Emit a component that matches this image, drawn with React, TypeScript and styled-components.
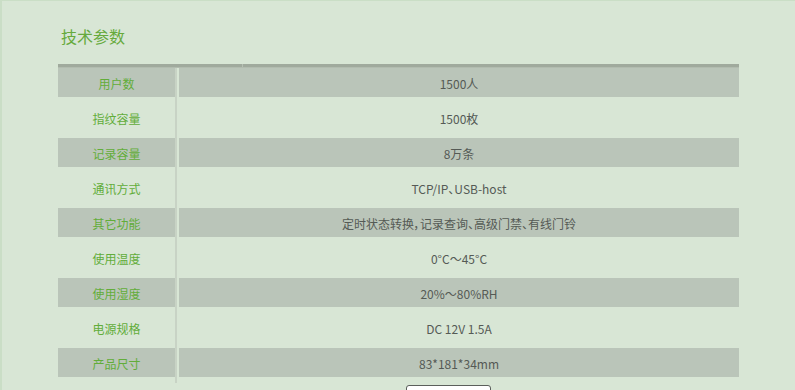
import React from "react";
import styled, { createGlobalStyle } from "styled-components";

const GlobalStyle = createGlobalStyle`
  html, body {
    margin: 0;
    padding: 0;
    background: #d8e6d5;
  }
  body {
    font-family: "Noto Sans CJK SC", "Noto Sans", sans-serif;
    font-feature-settings: "palt";
  }
`;

const Page = styled.div`
  box-sizing: border-box;
  height: 390px;
  overflow: hidden;
  border-top: 1px solid #cadec6;
  border-left: 2px solid #cadec6;
  padding: 23px 56px 0 56px;
  background: #d8e6d5;
`;

const Title = styled.h3`
  margin: 0 0 16px 3px;
  color: #66aa3c;
  font-size: 16px;
  font-weight: 400;
  line-height: 24px;
`;

const HeaderBar = styled.div`
  display: flex;
  height: 3px;
  border-bottom: 1px solid #b2bcaf;
`;

const HeaderCell = styled.div<{ $width?: number }>`
  background: #a0aa9d;
  ${(p) => (p.$width ? `width: ${p.$width}px;` : "flex: 1;")}
  & + & {
    border-left: 1px solid #b6c0b3;
  }
`;

const Row = styled.div`
  display: grid;
  grid-template-columns: 117px 4px 1fr;
  height: 35px;
`;

const Cell = styled.div<{ $shaded: boolean }>`
  box-sizing: border-box;
  height: 29px;
  padding-top: 2px;
  display: flex;
  align-items: center;
  justify-content: center;
  font-size: 12px;
  background: ${(p) => (p.$shaded ? "#bac5b9" : "transparent")};
`;

const Label = styled(Cell)`
  color: #62ad3a;
`;

const Value = styled(Cell)`
  color: #555a55;
`;

const Divider = styled.div`
  border-left: 2px solid #c8d3c5;
`;

const Footer = styled.div`
  padding: 2px 0 0 348px;
`;

const Button = styled.div`
  box-sizing: border-box;
  width: 85px;
  height: 24px;
  background: #ffffff;
  border: 1px solid #5b5f5b;
  border-radius: 3px;
`;

const specs: [string, string][] = [
  ["用户数", "1500人"],
  ["指纹容量", "1500枚"],
  ["记录容量", "8万条"],
  ["通讯方式", "TCP/IP、USB-host"],
  ["其它功能", "定时状态转换，记录查询、高级门禁、有线门铃"],
  ["使用温度", "0°C～45°C"],
  ["使用湿度", "20%～80%RH"],
  ["电源规格", "DC 12V 1.5A"],
  ["产品尺寸", "83*181*34mm"],
];

const App: React.FC = () => {
  return (
    <Page>
      <GlobalStyle />
      <Title>技术参数</Title>
      <HeaderBar>
        <HeaderCell $width={184} />
        <HeaderCell />
      </HeaderBar>
      {specs.map(([label, value], i) => (
        <Row key={label}>
          <Label $shaded={i % 2 === 0}>{label}</Label>
          <Divider />
          <Value $shaded={i % 2 === 0}>{value}</Value>
        </Row>
      ))}
      <Footer>
        <Button />
      </Footer>
    </Page>
  );
};

export default App;
